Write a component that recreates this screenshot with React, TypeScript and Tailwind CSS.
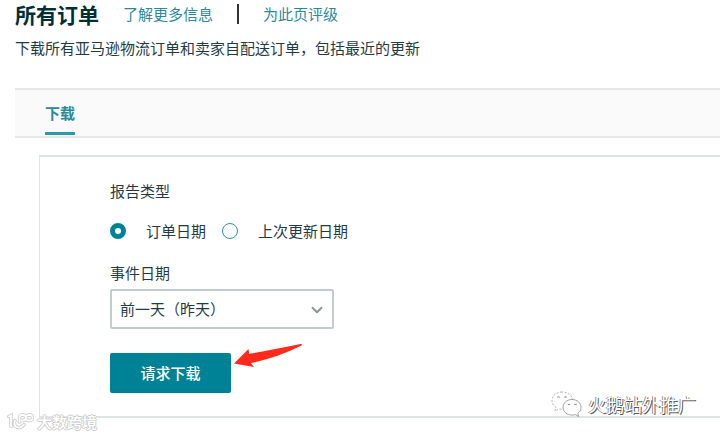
import { useState } from 'react';
import { ChevronDown } from 'lucide-react';

const REPORT_TYPES = [
  { value: 'order', label: '订单日期' },
  { value: 'updated', label: '上次更新日期' },
];

function PageHeader() {
  return (
    <header className="pl-[15px]">
      <div className="flex h-7 items-center">
        <h1 className="text-[21px] leading-7 font-bold text-[#002f36]">所有订单</h1>
        <a href="#learn" className="ml-6 text-[15px] leading-6 text-[#2a8a9b]">了解更多信息</a>
        <span className="ml-6 h-5 w-[2px] bg-[#333333]" />
        <a href="#rate" className="ml-6 text-[15px] leading-6 text-[#2a8a9b]">为此页评级</a>
      </div>
      <p className="mt-2 text-[15px] leading-6">下载所有亚马逊物流订单和卖家自配送订单，包括最近的更新</p>
    </header>
  );
}

function RadioOption({ value, label, checked, onSelect }: {
  value: string;
  label: string;
  checked: boolean;
  onSelect: (value: string) => void;
}) {
  return (
    <label className="flex items-center gap-5">
      <input
        type="radio"
        name="reportType"
        value={value}
        checked={checked}
        onChange={() => onSelect(value)}
        className="size-4 appearance-none rounded-full border border-[#2a93a3] bg-white checked:border-[5px] checked:border-[#008296]"
      />
      {label}
    </label>
  );
}

function Arrow() {
  return (
    <svg width="70" height="26" viewBox="0 0 70 26" className="pointer-events-none absolute -top-3 left-full ml-[2px]" aria-hidden="true">
      <path d="M1 22.5 15.5 8 16.2 12.8C32 10.5 49 6.5 67.5 3 69.3 2.8 69.5 4 68 4.8 52 12.5 36 18.5 18 22.2L21 26Z" fill="#ff2a1c" />
    </svg>
  );
}

function BrandMark() {
  const shape = 'M1.800 3.500 4 2.500V13.500M8 7.500C5.500 14.500 13 17 17 11.500M12.500 9V4.500a2.500 2.500 0 0 1 2.500-2.500h1a2.500 2.500 0 0 1 0 5.500h-1.500M21.500 2h1.500a2.700 2.700 0 0 1 0 5.500h-1.500a2.700 2.700 0 0 1 0-5.500Z';
  return (
    <svg width="27" height="18" viewBox="0 0 27 18" fill="none" strokeLinecap="round" aria-hidden="true">
      <path d={shape} stroke="#c8c8c8" strokeWidth="3.4" />
      <path d={shape} stroke="#ffffff" strokeWidth="1.8" />
    </svg>
  );
}

function ChatMark() {
  return (
    <svg width="31" height="27" viewBox="0 0 31 27" fill="#ffffff" stroke="#8c8c8c" strokeLinejoin="round" aria-hidden="true">
      <path d="M11 1C5 1 1 4.8 1 9.5c0 2.8 1.4 5 3.8 6.6L4 20l4-2.2c1 .3 2 .4 3 .4 6 0 10.5-3.8 10.5-8.7S17 1 11 1Z" stroke="#a3a3a3" strokeDasharray="2 1.5" strokeWidth=".8" />
      <path d="M21 8.5c-5 0-9 3.4-9 7.9 0 4.3 4 7.7 9 7.7 1.2 0 2.2-.2 3.2-.5l3.5 1.9-.9-3.1c2-1.4 3.2-3.5 3.2-6 0-4.5-4-7.9-9-7.9Z" strokeWidth=".8" />
      <path d="M6.5 6.5q1-1.5 2 0M13.5 6.5q1-1.5 2 0M17 14q1-1.5 2 0M23.5 14q1-1.5 2 0" fill="none" strokeWidth="1.2" />
    </svg>
  );
}

export default function App() {
  const [reportType, setReportType] = useState('order');

  return (
    <div className="relative min-h-screen overflow-hidden bg-white font-['Noto_Sans_CJK_SC',sans-serif] text-[15px] leading-6 text-[#1f3c45]">
      <PageHeader />

      <nav className="mt-7 ml-[15px] flex border-y-2 border-[#e6e8e8] bg-[#fafafa] pb-px pl-[30px]">
        <a href="#download" className="flex h-[45px] items-center border-b-3 border-[#2a9aaa] pt-1 font-bold text-[#2a8a9b]">
          下载
        </a>
      </nav>

      <main className="mt-[17px] ml-[39px] border-y-2 border-l border-[#dfe4e4] pt-[22px] pb-[23px] pl-[70px]">
        <fieldset>
          <legend>报告类型</legend>
          <div className="mt-4 flex gap-4">
            {REPORT_TYPES.map((type) => (
              <RadioOption
                key={type.value}
                value={type.value}
                label={type.label}
                checked={reportType === type.value}
                onSelect={setReportType}
              />
            ))}
          </div>
        </fieldset>

        <label htmlFor="eventDate" className="mt-[18px] block">事件日期</label>
        <div className="relative mt-1 w-56">
          <select
            id="eventDate"
            className="h-10 w-full appearance-none rounded-xs border-2 border-[#c3cccd] bg-white pl-2 text-[#1f3c45]"
          >
            <option>前一天（昨天）</option>
            <option>过去 7 天</option>
            <option>过去 30 天</option>
          </select>
          <ChevronDown size={18} strokeWidth={2.5} className="pointer-events-none absolute top-3 right-2 text-[#879596]" />
        </div>

        <div className="relative mt-6 w-fit">
          <button type="button" className="h-10 w-[121px] rounded-xs bg-[#008296] font-medium text-white shadow-xs">
            请求下载
          </button>
          <Arrow />
        </div>
      </main>

      {/* Watermarks */}
      <div className="absolute bottom-1 left-[7px] flex items-center gap-[3px]">
        <BrandMark />
        <span className="text-[15px] leading-6 font-medium text-white [text-shadow:1px_0_#cccccc,-1px_0_#cccccc,0_1px_#cccccc,0_-1px_#cccccc]">
          大数跨境
        </span>
      </div>
      <div className="absolute right-6 bottom-5 flex items-center gap-[6px]">
        <ChatMark />
        <span className="text-[18px] leading-7 text-white [text-shadow:1px_1px_#555555,-1px_0_#8a8a8a]">火鹅站外推广</span>
      </div>
    </div>
  );
}
